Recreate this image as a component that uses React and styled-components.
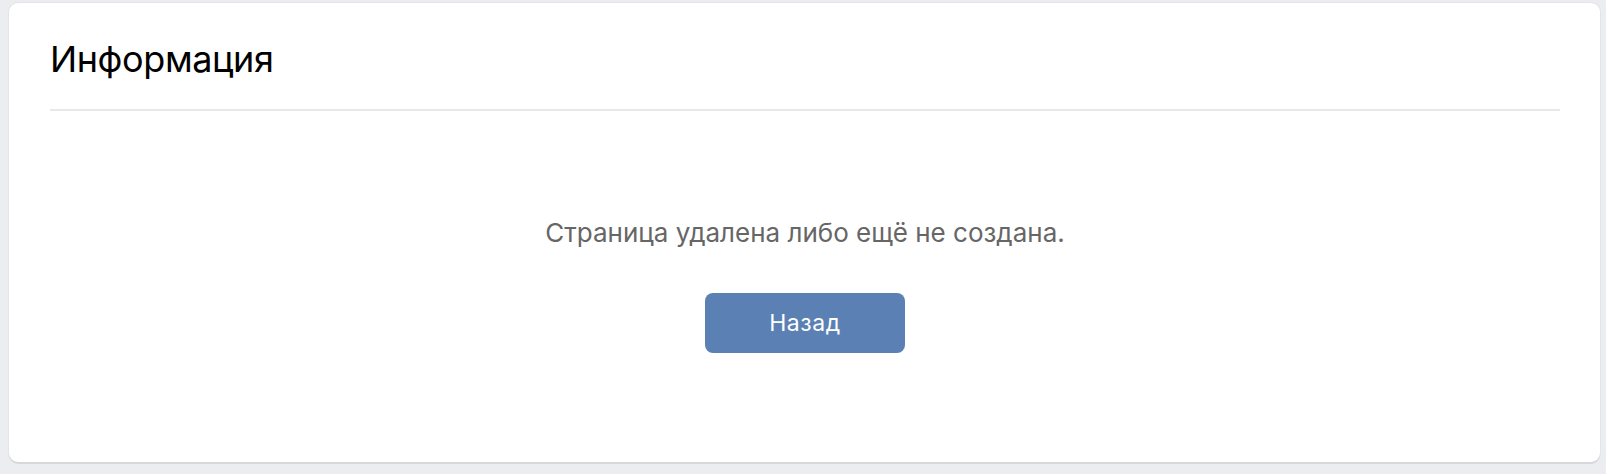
import React from "react";
import styled, { createGlobalStyle } from "styled-components";

const Global = createGlobalStyle`
  html, body {
    margin: 0;
    padding: 0;
    background: #ebedf0;
  }
  body {
    font-family: Inter, "Liberation Sans", Arial, sans-serif;
    -webkit-font-smoothing: antialiased;
  }
`;

const Page = styled.div`
  padding: 3px 6px 12px 9px;
  display: flex;
  flex-direction: column;
`;

const Card = styled.section`
  background: #fff;
  border-radius: 9px;
  box-shadow: 0 2px 0 0 #d7d8db, 0 0 0 1px #e3e4e8;
  height: 459px;
  box-sizing: border-box;
  padding: 0 40px 0 41px;
  display: flex;
  flex-direction: column;
`;

const Header = styled.header`
  padding-top: 34px;
  padding-bottom: 28px;
  border-bottom: 2px solid #e7e8ec;
`;

const Title = styled.h1`
  margin: 0;
  font-size: 36px;
  line-height: 44px;
  font-weight: 400;
  letter-spacing: -0.4px;
  color: #000;
`;

const Body = styled.div`
  display: flex;
  flex-direction: column;
  align-items: center;
  padding-top: 105px;
`;

const Message = styled.p`
  margin: 0;
  font-size: 26px;
  line-height: 33px;
  color: #666;
`;

const Button = styled.button`
  margin-top: 44px;
  width: 200px;
  height: 60px;
  border: 0;
  border-radius: 8px;
  background: #5b81b4;
  color: #fff;
  font-family: inherit;
  font-size: 23px;
  letter-spacing: 0.6px;
  cursor: pointer;
`;

export default function App() {
  return (
    <>
      <Global />
      <Page>
        <Card>
          <Header>
            <Title>Информация</Title>
          </Header>
          <Body>
            <Message>Страница удалена либо ещё не создана.</Message>
            <Button>Назад</Button>
          </Body>
        </Card>
      </Page>
    </>
  );
}
